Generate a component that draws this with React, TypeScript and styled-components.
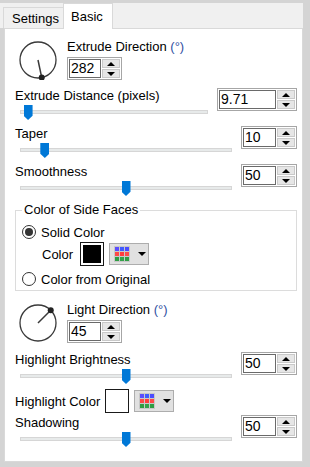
import React from "react";
import styled, { createGlobalStyle } from "styled-components";

const Global = createGlobalStyle`
  html, body { margin: 0; padding: 0; }
  body {
    background: #d4d4d4;
    font-family: "Liberation Sans", Arial, sans-serif;
    font-size: 13px;
    color: #000;
  }
`;

const Frame = styled.div`
  width: 310px;
  height: 467px;
  box-sizing: border-box;
  padding-top: 3px;
  background: #d4d4d4;
  overflow: hidden;
`;

const Window = styled.div`
  width: 303px;
  display: flex;
  flex-direction: column;
`;

const TabStrip = styled.div`
  height: 25px;
  background: #f0f0f0;
  display: flex;
  align-items: flex-end;
  padding-left: 3px;
  position: relative;
  z-index: 1;
`;

const Tab = styled.div<{ $active?: boolean }>`
  box-sizing: border-box;
  display: flex;
  align-items: center;
  border: 1px solid #d9d9d9;
  border-bottom: none;
  white-space: nowrap;
  ${(p) =>
    p.$active
      ? `
    height: 26px;
    margin-bottom: -1px;
    background: #fff;
    padding: 0 9px 0 7px;
  `
      : `
    height: 21px;
    background: #f0f0f0;
    border-right: none;
    padding: 0 4px 0 8px;
  `}
`;

const Panel = styled.div`
  margin-left: 4px;
  width: 299px;
  height: 434px;
  box-sizing: border-box;
  background: #fff;
  border: 1px solid #d9d9d9;
  padding: 10px 5px 0 10px;
  display: flex;
  flex-direction: column;
`;

const DialRow = styled.div<{ $mt: number }>`
  display: flex;
  align-items: flex-start;
  height: 41px;
  margin-top: ${(p) => p.$mt}px;
`;

const DialSvg = styled.svg`
  width: 40px;
  height: 40px;
  margin: 1px 0 0 3px;
  flex: none;
`;

const DialControls = styled.div`
  margin-left: 9px;
  display: flex;
  flex-direction: column;
  gap: 2px;
`;

const TextLine = styled.div`
  line-height: 16px;
  height: 16px;
  white-space: nowrap;
`;

const Degree = styled.span`
  color: #2f4f9f;
`;

const SpinBox = styled.div<{ $w: number }>`
  width: ${(p) => p.$w}px;
  height: 23px;
  box-sizing: border-box;
  display: flex;
  border: 1px solid #a6a6a6;
  background: #fff;
  padding: 1px;
  gap: 1px;
  grid-column: 2;
  grid-row: 1 / span 2;
  align-self: start;
`;

const SpinField = styled.div`
  flex: 1;
  border: 1px solid #6a6a6a;
  font-size: 14px;
  line-height: 17px;
  padding-left: 1px;
  display: flex;
  align-items: center;
`;

const SpinButtons = styled.div`
  width: 18px;
  display: flex;
  flex-direction: column;
  gap: 1px;
`;

const SpinButton = styled.div<{ $dir: "up" | "down" }>`
  flex: 1;
  box-sizing: border-box;
  background: #e6e6e6;
  border: 1px solid #c9c9c9;
  display: flex;
  align-items: center;
  justify-content: center;
  &::after {
    content: "";
    width: 0;
    height: 0;
    border-left: 4px solid transparent;
    border-right: 4px solid transparent;
    ${(p) =>
      p.$dir === "up"
        ? "border-bottom: 4px solid #000;"
        : "border-top: 4px solid #000;"}
  }
`;

const SliderRow = styled.div<{ $mt: number }>`
  display: grid;
  grid-template-columns: 1fr auto;
  grid-template-rows: 16px 16px;
  margin-top: ${(p) => p.$mt}px;
`;

const RowLabel = styled(TextLine)`
  grid-column: 1;
  grid-row: 1;
`;

const TrackArea = styled.div`
  grid-column: 1;
  grid-row: 2;
  position: relative;
  margin: 0 9px 0 5px;
`;

const Track = styled.div`
  height: 4px;
  box-sizing: border-box;
  margin-top: 6px;
  background: #e7eaea;
  border: 1px solid #d6d6d6;
`;

const Thumb = styled.div`
  position: absolute;
  top: 1px;
  width: 9px;
  height: 15px;
  background: #0078d7;
  clip-path: polygon(0 0, 100% 0, 100% 72%, 50% 100%, 0 72%);
`;

const Group = styled.fieldset`
  margin: 6px 0 0 0;
  padding: 6px 6px 3px 6px;
  border: 1px solid #dcdcdc;
  min-inline-size: 0;
`;

const Legend = styled.legend`
  padding: 0 2px;
  line-height: 16px;
`;

const RadioRow = styled.div<{ $mt: number }>`
  display: flex;
  align-items: center;
  gap: 5px;
  height: 16px;
  margin-top: ${(p) => p.$mt}px;
`;

const RadioCircle = styled.div<{ $checked?: boolean }>`
  width: 14px;
  height: 14px;
  box-sizing: border-box;
  border: 1px solid #333;
  border-radius: 50%;
  background: #fff;
  display: flex;
  align-items: center;
  justify-content: center;
  &::after {
    content: "";
    width: 8px;
    height: 8px;
    border-radius: 50%;
    background: ${(p) => (p.$checked ? "#333" : "transparent")};
  }
`;

const ColorRow = styled.div<{ $mt: number; $indent: number }>`
  display: flex;
  align-items: center;
  height: 24px;
  margin-top: ${(p) => p.$mt}px;
  padding-left: ${(p) => p.$indent}px;
`;

const Swatch = styled.div<{ $color: string; $ml: number }>`
  width: 24px;
  height: 24px;
  box-sizing: border-box;
  margin-left: ${(p) => p.$ml}px;
  border: 1px solid #1a1a1a;
  background: ${(p) => p.$color};
  box-shadow: inset 0 0 0 2px #fff;
`;

const PaletteButton = styled.div`
  width: 40px;
  height: 22px;
  box-sizing: border-box;
  margin-left: 5px;
  border: 1px solid #adadad;
  background: #e1e1e1;
  display: flex;
  align-items: center;
  padding-left: 4px;
  gap: 8px;
  &::after {
    content: "";
    width: 0;
    height: 0;
    border-left: 4px solid transparent;
    border-right: 4px solid transparent;
    border-top: 4px solid #000;
  }
`;

const PaletteGrid = styled.div`
  display: grid;
  grid-template-columns: repeat(3, 4px);
  grid-template-rows: repeat(3, 4px);
  gap: 1px;
  padding: 1px;
  background: #c8c8c8;
`;

const PaletteCell = styled.div<{ $c: string }>`
  background: ${(p) => p.$c};
`;

function Spinner({ value, w }: { value: string; w: number }) {
  return (
    <SpinBox $w={w}>
      <SpinField>{value}</SpinField>
      <SpinButtons>
        <SpinButton $dir="up" />
        <SpinButton $dir="down" />
      </SpinButtons>
    </SpinBox>
  );
}

function Dial({ angle }: { angle: number }) {
  const r = 18;
  const a = (angle * Math.PI) / 180;
  const x = 20 + r * Math.cos(a);
  const y = 20 - r * Math.sin(a);
  return (
    <DialSvg viewBox="0 0 40 40">
      <circle cx="20" cy="20" r={r} fill="none" stroke="#3a3a3a" strokeWidth="1.3" />
      <line x1="20" y1="20" x2={x} y2={y} stroke="#3a3a3a" strokeWidth="1.5" />
      <circle cx={x} cy={y} r="3" fill="#222" />
    </DialSvg>
  );
}

function Slider({
  label,
  value,
  pos,
  w,
  mt,
}: {
  label: string;
  value: string;
  pos: number;
  w: number;
  mt: number;
}) {
  return (
    <SliderRow $mt={mt}>
      <RowLabel>{label}</RowLabel>
      <Spinner value={value} w={w} />
      <TrackArea>
        <Track />
        <Thumb style={{ left: `calc(${pos * 100}% - ${pos * 9}px)` }} />
      </TrackArea>
    </SliderRow>
  );
}

const paletteColors = [
  "#5a4cff", "#3f5bff", "#4b4bff",
  "#ff4848", "#ff3d3d", "#ff4a4a",
  "#2f9e44", "#34a34a", "#2f9e44",
];

function Palette() {
  return (
    <PaletteButton>
      <PaletteGrid>
        {paletteColors.map((c, i) => (
          <PaletteCell key={i} $c={c} />
        ))}
      </PaletteGrid>
    </PaletteButton>
  );
}

export default function App() {
  return (
    <>
      <Global />
      <Frame>
        <Window>
          <TabStrip>
            <Tab>Settings</Tab>
            <Tab $active>Basic</Tab>
          </TabStrip>
          <Panel>
            <DialRow $mt={0}>
              <Dial angle={282} />
              <DialControls>
                <TextLine>
                  Extrude Direction <Degree>(°)</Degree>
                </TextLine>
                <Spinner value="282" w={55} />
              </DialControls>
            </DialRow>

            <Slider label="Extrude Distance (pixels)" value="9.71" pos={0.02} w={80} mt={8} />
            <Slider label="Taper" value="10" pos={0.1} w={56} mt={6} />
            <Slider label="Smoothness" value="50" pos={0.5} w={56} mt={6} />

            <Group>
              <Legend>Color of Side Faces</Legend>
              <RadioRow $mt={0}>
                <RadioCircle $checked />
                <span>Solid Color</span>
              </RadioRow>
              <ColorRow $mt={2} $indent={20}>
                <span>Color</span>
                <Swatch $color="#000" $ml={7} />
                <Palette />
              </ColorRow>
              <RadioRow $mt={5}>
                <RadioCircle />
                <span>Color from Original</span>
              </RadioRow>
            </Group>

            <DialRow $mt={11}>
              <Dial angle={45} />
              <DialControls>
                <TextLine>
                  Light Direction <Degree>(°)</Degree>
                </TextLine>
                <Spinner value="45" w={55} />
              </DialControls>
            </DialRow>

            <Slider label="Highlight Brightness" value="50" pos={0.5} w={56} mt={9} />

            <ColorRow $mt={5} $indent={0}>
              <span>Highlight Color</span>
              <Swatch $color="#fff" $ml={5} />
              <Palette />
            </ColorRow>

            <Slider label="Shadowing" value="50" pos={0.5} w={56} mt={2} />
          </Panel>
        </Window>
      </Frame>
    </>
  );
}
